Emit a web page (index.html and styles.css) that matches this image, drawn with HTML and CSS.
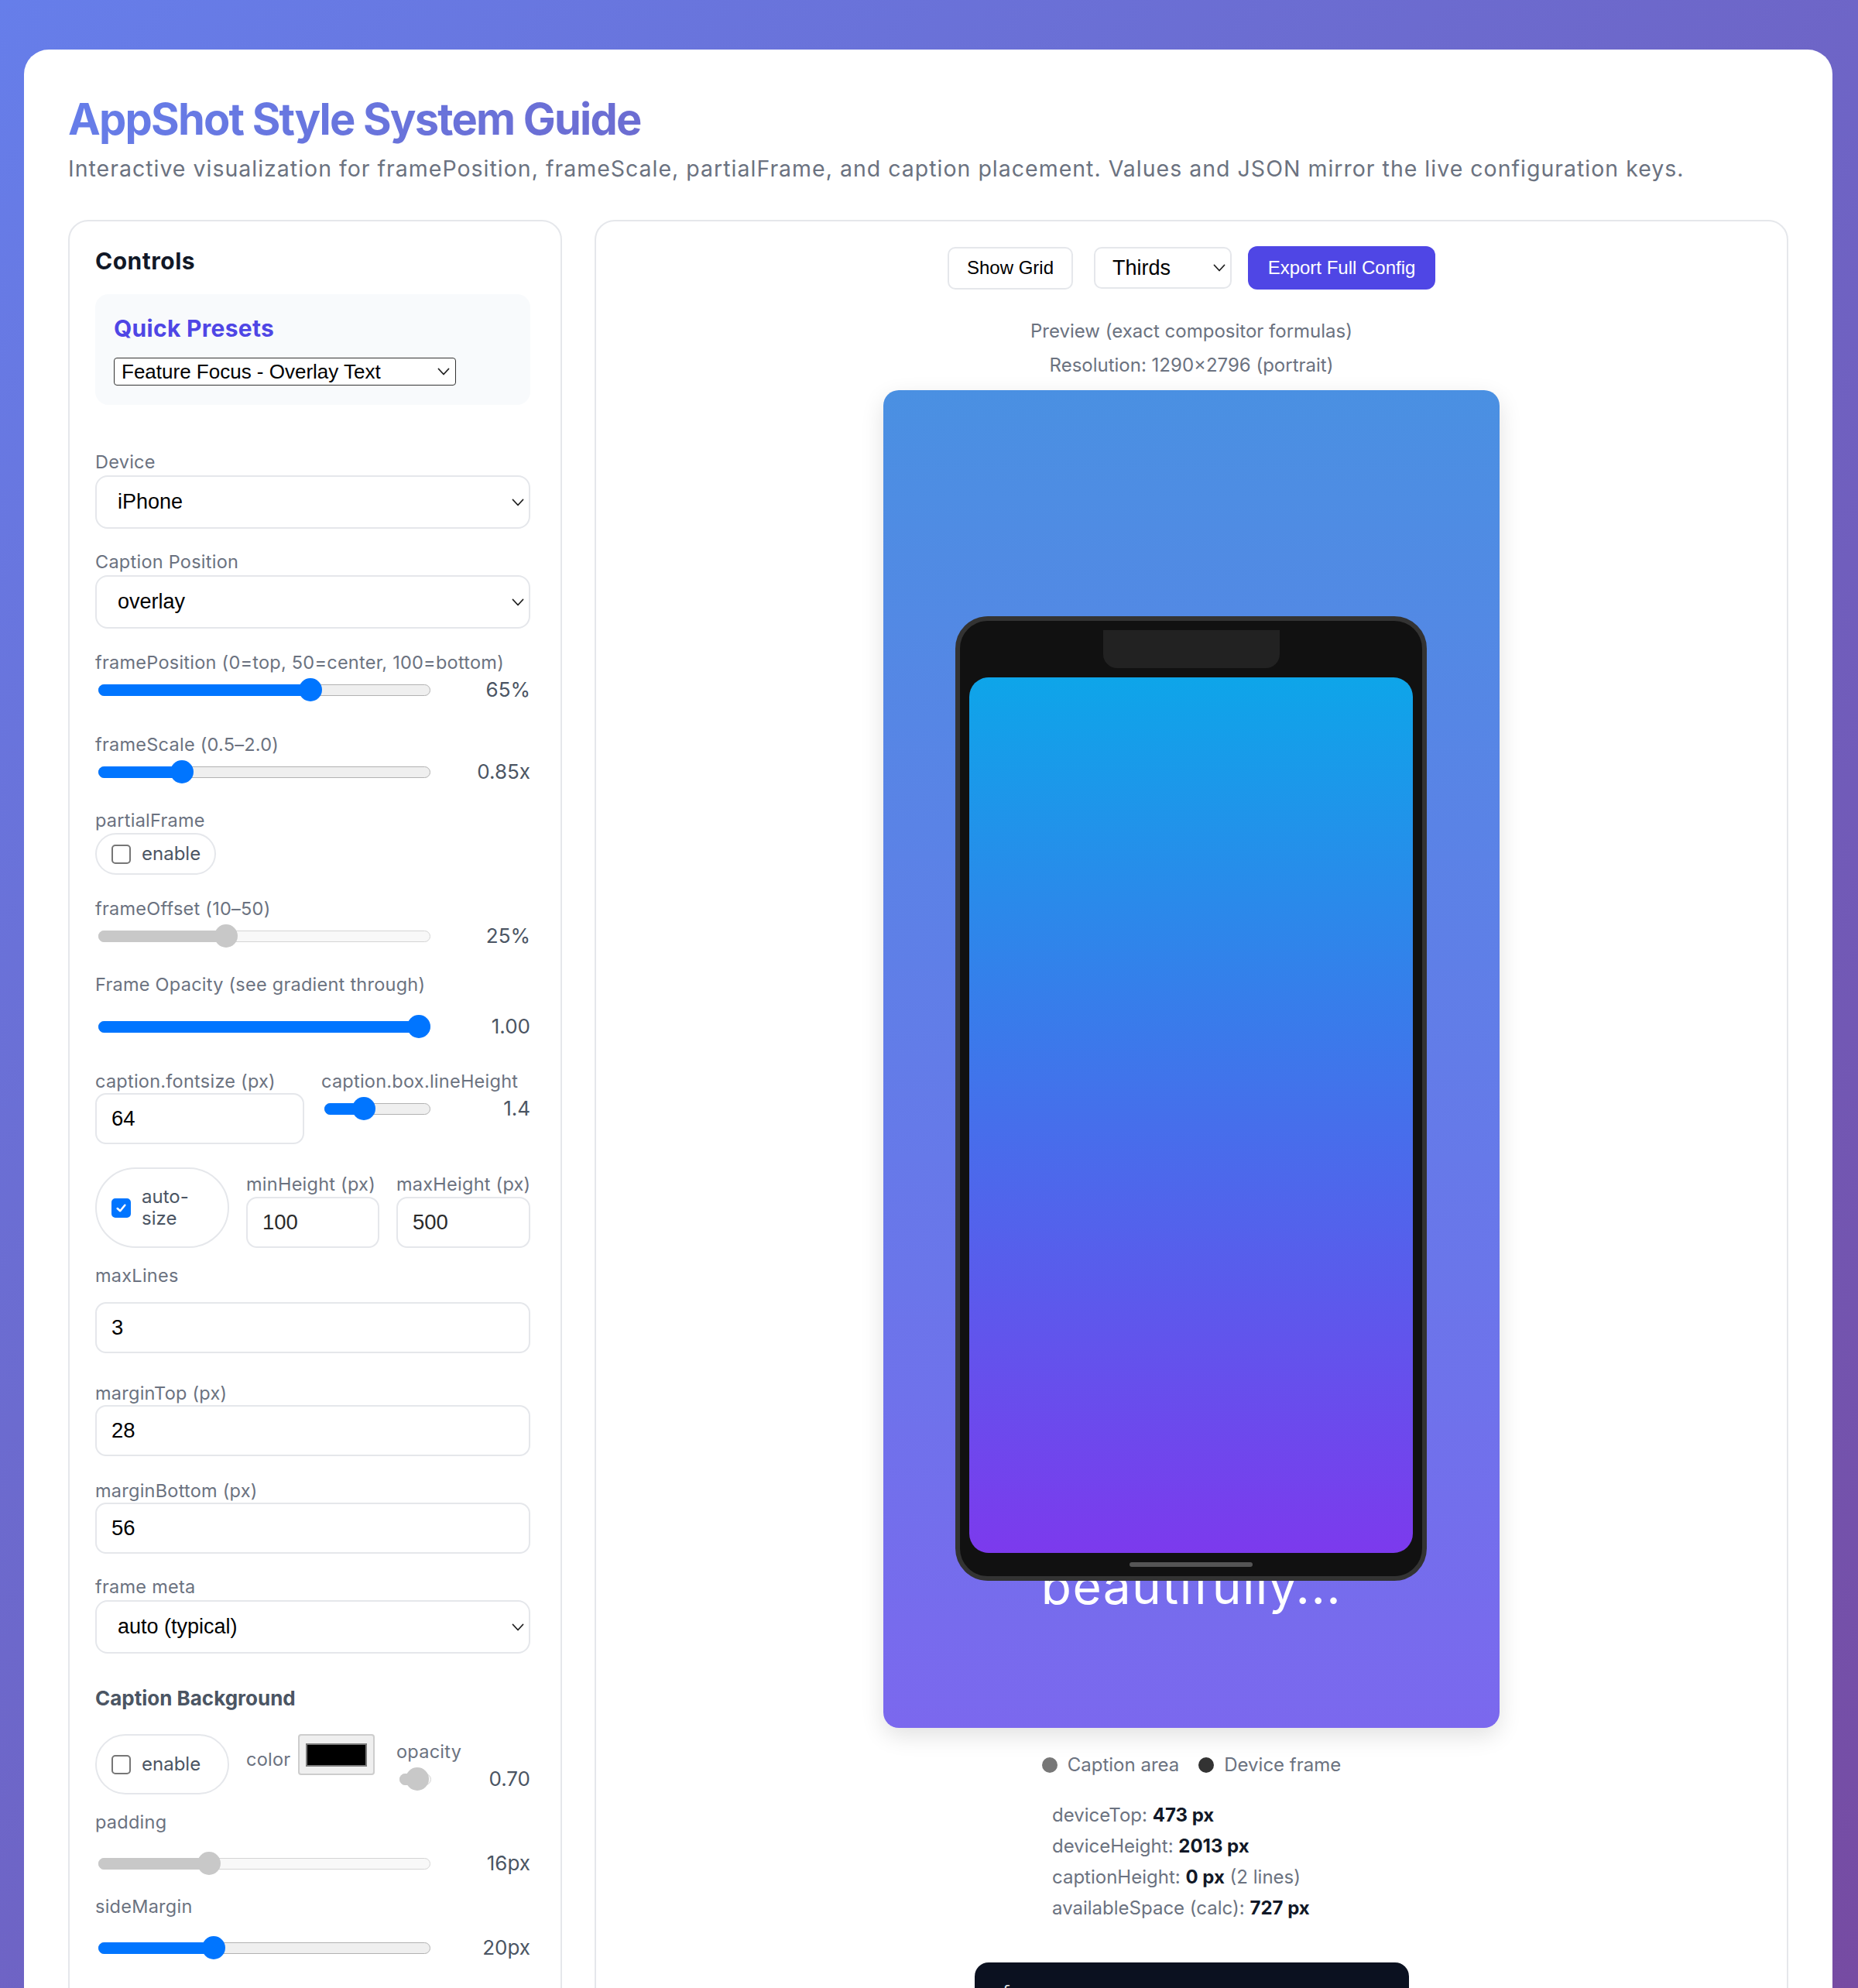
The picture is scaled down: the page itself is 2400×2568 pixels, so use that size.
FILE: index.html
```html
<!DOCTYPE html>
<html lang="en">
<head>
<meta charset="utf-8">
<title>AppShot Style System Guide</title>
<link rel="stylesheet" href="styles.css">
</head>
<body>
<div class="page">
  <main class="card">
    <h1 class="title">AppShot Style System Guide</h1>
    <p class="subtitle">Interactive visualization for framePosition, frameScale, partialFrame, and caption placement. Values and JSON mirror the live configuration keys.</p>

    <div class="layout">
      <aside class="panel controls">
        <h2 class="panel-title">Controls</h2>

        <div class="presets">
          <h3 class="presets-title">Quick Presets</h3>
          <div class="preset-select"><span>Feature Focus - Overlay Text</span><svg class="chev" viewBox="0 0 16 10" width="16" height="10"><polyline points="1.5,1.5 8,8.5 14.5,1.5"/></svg></div>
        </div>

        <div class="field f-device">
          <div class="lbl">Device</div>
          <div class="select"><span>iPhone</span><svg class="chev" viewBox="0 0 16 10" width="16" height="10"><polyline points="1.5,1.5 8,8.5 14.5,1.5"/></svg></div>
        </div>

        <div class="field f-std">
          <div class="lbl">Caption Position</div>
          <div class="select"><span>overlay</span><svg class="chev" viewBox="0 0 16 10" width="16" height="10"><polyline points="1.5,1.5 8,8.5 14.5,1.5"/></svg></div>
        </div>

        <div class="field f-29">
          <div class="lbl">framePosition (0=top, 50=center, 100=bottom)</div>
          <div class="srow">
            <div class="range" style="--p:0.65"><div class="track"></div><div class="fill"></div><div class="thumb"></div></div>
            <span class="val">65%</span>
          </div>
        </div>

        <div class="field f-36">
          <div class="lbl">frameScale (0.5–2.0)</div>
          <div class="srow">
            <div class="range" style="--p:0.2333"><div class="track"></div><div class="fill"></div><div class="thumb"></div></div>
            <span class="val">0.85x</span>
          </div>
        </div>

        <div class="field f-std">
          <div class="lbl">partialFrame</div>
          <div class="pill pill-inline"><span class="cb"></span><span>enable</span></div>
        </div>

        <div class="field f-29">
          <div class="lbl">frameOffset (10–50)</div>
          <div class="srow">
            <div class="range off" style="--p:0.375"><div class="track"></div><div class="fill"></div><div class="thumb"></div></div>
            <span class="val">25%</span>
          </div>
        </div>

        <div class="field f-std">
          <div class="lbl">Frame Opacity (see gradient through)</div>
          <div class="srow srow-gap">
            <div class="range" style="--p:1"><div class="track"></div><div class="fill"></div><div class="thumb"></div></div>
            <span class="val">1.00</span>
          </div>
        </div>

        <div class="grid2 f-36">
          <div>
            <div class="lbl">caption.fontsize (px)</div>
            <div class="input">64</div>
          </div>
          <div>
            <div class="lbl">caption.box.lineHeight</div>
            <div class="srow">
              <div class="range range-short" style="--p:0.34"><div class="track"></div><div class="fill"></div><div class="thumb"></div></div>
              <span class="val">1.4</span>
            </div>
          </div>
        </div>

        <div class="grid3 f-30">
          <div class="pill"><span class="cb on"><svg viewBox="0 0 14 14" width="15" height="15"><polyline points="2.5,7.5 5.8,10.5 11.5,3.5"/></svg></span><span class="pill-text">auto-size</span></div>
          <div class="sub">
            <div class="lbl">minHeight (px)</div>
            <div class="input input-soft">100</div>
          </div>
          <div class="sub">
            <div class="lbl">maxHeight (px)</div>
            <div class="input input-soft">500</div>
          </div>
        </div>

        <div class="field f-21">
          <div class="lbl">maxLines</div>
          <div class="input input-gap">3</div>
        </div>

        <div class="field f-37">
          <div class="lbl">marginTop (px)</div>
          <div class="input">28</div>
        </div>

        <div class="field f-30">
          <div class="lbl">marginBottom (px)</div>
          <div class="input">56</div>
        </div>

        <div class="field f-std">
          <div class="lbl">frame meta</div>
          <div class="select"><span>auto (typical)</span><svg class="chev" viewBox="0 0 16 10" width="16" height="10"><polyline points="1.5,1.5 8,8.5 14.5,1.5"/></svg></div>
        </div>

        <h3 class="section-title">Caption Background</h3>

        <div class="grid3 bg-row">
          <div class="pill"><span class="cb"></span><span>enable</span></div>
          <div class="color-cell">
            <span class="lbl-inline">color</span>
            <span class="swatch"><span class="swatch-inner"></span></span>
          </div>
          <div class="opacity-cell">
            <div class="lbl">opacity</div>
            <div class="srow">
              <div class="range range-tiny off" style="--p:0.7"><div class="track"></div><div class="fill"></div><div class="thumb"></div></div>
              <span class="val">0.70</span>
            </div>
          </div>
        </div>

        <div class="field f-21">
          <div class="lbl">padding</div>
          <div class="srow srow-mid">
            <div class="range off" style="--p:0.322"><div class="track"></div><div class="fill"></div><div class="thumb"></div></div>
            <span class="val">16px</span>
          </div>
        </div>

        <div class="field f-21">
          <div class="lbl">sideMargin</div>
          <div class="srow srow-mid">
            <div class="range" style="--p:0.335"><div class="track"></div><div class="fill"></div><div class="thumb"></div></div>
            <span class="val">20px</span>
          </div>
        </div>
      </aside>

      <section class="panel preview">
        <div class="toolbar">
          <button class="btn">Show Grid</button>
          <div class="tsel"><span>Thirds</span><svg class="chev" viewBox="0 0 16 10" width="16" height="10"><polyline points="1.5,1.5 8,8.5 14.5,1.5"/></svg></div>
          <button class="btn-primary">Export Full Config</button>
        </div>

        <div class="note note-first">Preview (exact compositor formulas)</div>
        <div class="note note-second">Resolution: 1290×2796 (portrait)</div>

        <div class="canvas">
          <div class="caption">beautifully...</div>
          <div class="phone">
            <div class="notch"></div>
            <div class="screen"></div>
            <div class="home"></div>
          </div>
        </div>

        <div class="legend">
          <span class="leg"><span class="dot dot-caption"></span>Caption area</span>
          <span class="leg"><span class="dot dot-device"></span>Device frame</span>
        </div>

        <div class="stats">
          <div>deviceTop: <b>473 px</b></div>
          <div>deviceHeight: <b>2013 px</b></div>
          <div>captionHeight: <b>0 px</b> (2 lines)</div>
          <div>availableSpace (calc): <b>727 px</b></div>
        </div>

        <pre class="json">{</pre>
      </section>
    </div>
  </main>
</div>
</body>
</html>
```

FILE: styles.css
```css
* { box-sizing: border-box; }

html, body {
  margin: 0;
  padding: 0;
}

body {
  font-family: Inter, "Noto Sans", "Liberation Sans", sans-serif;
  background: linear-gradient(135deg, #667eea 0%, #764ba2 100%);
  color: #111827;
}

.page {
  height: 2568px;
  overflow: hidden;
  padding: 64px 33px 0 31px;
}

.card {
  background: #ffffff;
  border-radius: 32px 32px 0 0;
  padding: 56px 57px 0;
  min-height: 2600px;
}

.title {
  margin: 0 0 13px;
  font-size: 56px;
  line-height: 68px;
  font-weight: 700;
  letter-spacing: -1.8px;
  background: linear-gradient(135deg, #667eea 0%, #764ba2 100%);
  -webkit-background-clip: text;
  background-clip: text;
  color: transparent;
}

.subtitle {
  margin: 0 0 49px;
  font-size: 28.5px;
  line-height: 34px;
  letter-spacing: 1px;
  color: #6b7280;
  white-space: nowrap;
}

.layout {
  display: grid;
  grid-template-columns: 638px 1fr;
  gap: 42px;
  align-items: start;
}

.panel {
  border: 2px solid #e5e7eb;
  border-radius: 26px;
  background: #ffffff;
}

/* ---------- Controls ---------- */

.controls {
  padding: 33px 39px 80px 33px;
}

.panel-title {
  margin: 0 0 25px;
  font-size: 30px;
  line-height: 36px;
  font-weight: 700;
  letter-spacing: 0.5px;
  color: #111827;
}

.presets {
  background: #f8fafc;
  border-radius: 17px;
  padding: 26px 24px 25px;
}

.presets-title {
  margin: 0 0 20px;
  font-size: 30px;
  line-height: 36px;
  font-weight: 700;
  letter-spacing: 0.3px;
  color: #4f46e5;
}

.preset-select {
  width: 442px;
  height: 36px;
  border: 1.5px solid #333333;
  border-radius: 4px;
  background: #ffffff;
  display: flex;
  align-items: center;
  justify-content: space-between;
  padding: 0 7px 0 9px;
  font-family: "Liberation Sans", Arial, sans-serif;
  font-size: 26px;
  color: #000000;
}

.chev {
  flex: none;
}
.chev polyline {
  fill: none;
  stroke: #1f1f1f;
  stroke-width: 1.8;
  stroke-linecap: round;
  stroke-linejoin: round;
}

.field { margin-top: 28px; }
.f-device { margin-top: 59px; }
.f-std { margin-top: 28px; }
.f-29 { margin-top: 29px; }
.f-36 { margin-top: 36px; }
.f-30 { margin-top: 30px; }
.f-21 { margin-top: 21px; }
.f-37 { margin-top: 37px; }

.lbl {
  display: block;
  font-size: 23.5px;
  line-height: 30px;
  letter-spacing: 0.25px;
  color: #6b7280;
  white-space: nowrap;
}

.select {
  margin-top: 2px;
  height: 69px;
  border: 2px solid #e5e7eb;
  border-radius: 16px;
  background: #ffffff;
  display: flex;
  align-items: center;
  justify-content: space-between;
  padding: 0 6px 0 27px;
  font-family: "Liberation Sans", Arial, sans-serif;
  font-size: 27px;
  color: #000000;
}

.input {
  height: 66px;
  border: 2px solid #e5e7eb;
  border-radius: 14px;
  background: #ffffff;
  display: flex;
  align-items: center;
  padding-left: 19px;
  font-family: "Liberation Sans", Arial, sans-serif;
  font-size: 27.5px;
  color: #000000;
}
.input-soft { color: #2b2b2b; margin-top: 1px; }
.input-gap { margin-top: 19px; }

/* sliders */
.srow {
  display: flex;
  align-items: center;
  height: 40px;
}
.srow-gap { margin-top: 19px; }
.srow-mid { margin-top: 18px; }

.range {
  position: relative;
  flex: none;
  width: 429px;
  height: 15px;
  margin-left: 4px;
}
.range-short { width: 137px; }
.range-tiny { width: 41px; }

.range .track {
  position: absolute;
  inset: 0;
  background: #efefef;
  border: 1.5px solid #b2b2b2;
  border-radius: 8px;
}
.range .fill {
  position: absolute;
  left: 0;
  top: 0;
  bottom: 0;
  width: calc(var(--p) * (100% - 30px) + 15px);
  background: #0075ff;
  border-radius: 8px;
}
.range .thumb {
  position: absolute;
  top: 50%;
  left: calc(var(--p) * (100% - 30px));
  width: 30px;
  height: 30px;
  margin-top: -15px;
  border-radius: 50%;
  background: #0075ff;
}
.range.off .track {
  background: #f8f8f8;
  border-color: #d4d4d4;
}
.range.off .fill,
.range.off .thumb {
  background: #c8c8c8;
}

.val {
  margin-left: auto;
  font-size: 26px;
  line-height: 30px;
  color: #4b5563;
}

/* pills & checkboxes */
.pill {
  display: flex;
  align-items: center;
  gap: 14px;
  border: 2px solid #e5e7eb;
  border-radius: 999px;
  padding: 0 16px 0 19px;
  font-size: 24px;
  line-height: 28px;
  color: #4b5563;
}
.pill-inline {
  display: inline-flex;
  margin-top: 1px;
  height: 54px;
  padding-right: 18px;
}
.pill-text {
  min-width: 0;
}

.cb {
  flex: none;
  width: 25px;
  height: 25px;
  border: 2px solid #767676;
  border-radius: 5px;
  background: #ffffff;
  display: flex;
  align-items: center;
  justify-content: center;
}
.cb.on {
  background: #0075ff;
  border-color: #0075ff;
}
.cb svg polyline {
  fill: none;
  stroke: #ffffff;
  stroke-width: 2.4;
  stroke-linecap: round;
  stroke-linejoin: round;
}

.grid2 {
  display: grid;
  grid-template-columns: 270px 270px;
  column-gap: 22px;
}
.grid3 {
  display: grid;
  grid-template-columns: 173px 172px 173px;
  column-gap: 22px;
}
.sub .lbl { margin-top: 7px; }

.section-title {
  margin: 42px 0 0;
  font-size: 26px;
  line-height: 32px;
  font-weight: 700;
  color: #4b5563;
}

.bg-row { margin-top: 30px; }

.color-cell {
  display: flex;
  align-items: flex-start;
  gap: 10px;
}
.lbl-inline {
  font-size: 23.5px;
  line-height: 30px;
  letter-spacing: 0.25px;
  color: #6b7280;
  margin-top: 18px;
}
.swatch {
  width: 99px;
  height: 53px;
  border: 2px solid #cdcdcd;
  border-radius: 4px;
  background: #efefef;
  display: flex;
  align-items: center;
  justify-content: center;
}
.swatch-inner {
  width: 79px;
  height: 30px;
  background: #000000;
  border: 2px solid #7a7a7a;
}

.opacity-cell {
  padding-top: 8px;
}

/* ---------- Preview ---------- */

.preview {
  padding: 32px 40px 60px;
  display: flex;
  flex-direction: column;
  align-items: center;
}

.toolbar {
  display: flex;
  align-items: center;
}

.btn {
  width: 162px;
  height: 55px;
  border: 2px solid #e5e7eb;
  border-radius: 10px;
  background: #ffffff;
  font-family: "Liberation Sans", Arial, sans-serif;
  font-size: 24px;
  color: #000000;
  padding: 0;
}

.tsel {
  margin-left: 27px;
  width: 178px;
  height: 54px;
  border: 2px solid #e5e7eb;
  border-radius: 10px;
  background: #ffffff;
  display: flex;
  align-items: center;
  justify-content: space-between;
  padding: 0 6px 0 22px;
  font-family: "Liberation Sans", Arial, sans-serif;
  font-size: 27px;
  color: #000000;
}

.btn-primary {
  margin-left: 21px;
  width: 242px;
  height: 56px;
  border: none;
  border-radius: 12px;
  background: #4f46e5;
  color: #ffffff;
  font-family: "Liberation Sans", Arial, sans-serif;
  font-size: 24px;
  padding: 0;
}

.note {
  font-size: 24px;
  line-height: 30px;
  color: #6b7280;
}
.note-first { margin-top: 39px; }
.note-second { margin-top: 14px; }

.canvas {
  position: relative;
  margin-top: 17px;
  width: 796px;
  height: 1728px;
  border-radius: 20px;
  background: linear-gradient(180deg, #4a90e2 0%, #7b68ee 100%);
  box-shadow: 0 10px 30px rgba(0, 0, 0, 0.12);
  overflow: hidden;
  flex: none;
}

.caption {
  position: absolute;
  left: 0;
  right: 0;
  top: 1506px;
  text-align: center;
  font-size: 64px;
  line-height: 77px;
  letter-spacing: 1.4px;
  color: #ffffff;
  z-index: 1;
}

.phone {
  position: absolute;
  left: 93px;
  top: 292px;
  width: 609px;
  height: 1246px;
  border: 6px solid #333333;
  border-radius: 42px;
  background: #111111;
  z-index: 2;
}

.notch {
  position: absolute;
  left: 185px;
  top: 12px;
  width: 228px;
  height: 49px;
  background: #222222;
  border-radius: 0 0 18px 18px;
}

.screen {
  position: absolute;
  left: 12px;
  top: 73px;
  width: 573px;
  height: 1131px;
  border-radius: 25px;
  background: linear-gradient(180deg, #0ea5e9 0%, #7c3aed 100%);
}

.home {
  position: absolute;
  left: 219px;
  top: 1216px;
  width: 159px;
  height: 6px;
  border-radius: 3px;
  background: #555555;
}

.legend {
  margin-top: 33px;
  display: flex;
  gap: 25px;
  font-size: 24px;
  line-height: 30px;
  color: #6b7280;
}
.leg {
  display: flex;
  align-items: center;
  gap: 13px;
}
.dot {
  width: 20px;
  height: 20px;
  border-radius: 50%;
}
.dot-caption { background: #777777; }
.dot-device { background: #333333; }

.stats {
  width: 360px;
  margin-top: 30px;
  font-size: 24px;
  line-height: 40px;
  color: #6b7280;
}
.stats b {
  color: #111827;
  font-weight: 700;
}

.json {
  width: 561px;
  height: 200px;
  margin: 50px 0 0;
  background: #0b1120;
  border-radius: 18px;
  padding: 24px 34px;
  color: #e5e7eb;
  font-family: "Liberation Mono", "DejaVu Sans Mono", monospace;
  font-size: 22px;
  line-height: 32px;
}
```
